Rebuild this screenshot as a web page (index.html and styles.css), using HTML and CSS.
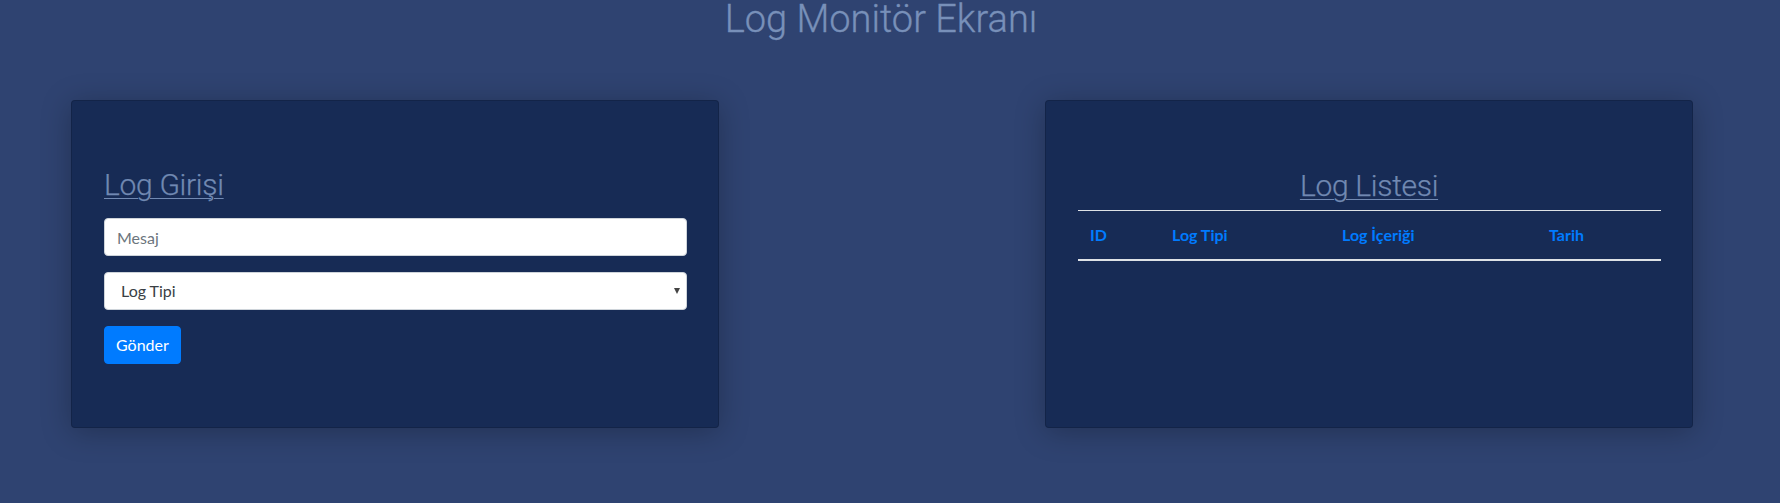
FILE: index.html
```html
<!DOCTYPE html>
<html lang="tr">
<head>
<meta charset="utf-8">
<title>Log Monitör Ekranı</title>
<link rel="stylesheet" href="styles.css">
</head>
<body>
  <h1 class="page-title">Log Monitör Ekranı</h1>
  <main class="panels">
    <section class="card card-form">
      <h2 class="card-title">Log Girişi</h2>
      <form class="log-form">
        <input class="field" type="text" placeholder="Mesaj">
        <div class="select-wrap">
          <select class="field field-select">
            <option>Log Tipi</option>
            <option>Info</option>
            <option>Warning</option>
            <option>Error</option>
          </select>
        </div>
        <button class="btn" type="button">Gönder</button>
      </form>
    </section>
    <section class="card card-list">
      <h2 class="card-title card-title-center">Log Listesi</h2>
      <table class="log-table">
        <thead>
          <tr>
            <th class="col-id">ID</th>
            <th class="col-type">Log Tipi</th>
            <th class="col-content">Log İçeriği</th>
            <th class="col-date">Tarih</th>
          </tr>
        </thead>
        <tbody></tbody>
      </table>
    </section>
  </main>
</body>
</html>
```

FILE: styles.css
```css
* { box-sizing: border-box; }

html, body {
  margin: 0;
  padding: 0;
}

body {
  background: #2f4371;
  font-family: Lato, "Noto Sans", sans-serif;
  font-size: 16px;
  color: #212529;
  height: 503px;
  overflow: hidden;
}

.page-title {
  margin: 0;
  font-family: Roboto, sans-serif;
  font-weight: 300;
  font-size: 38px;
  line-height: 1;
  height: 38px;
  text-align: center;
  color: #7890b9;
  padding-right: 18px;
  -webkit-text-stroke: 0.3px #7890b9;
}

.panels {
  display: grid;
  grid-template-columns: 648px 648px;
  column-gap: 326px;
  padding-left: 71px;
  margin-top: 62px;
}

.card {
  height: 328px;
  background: #172b55;
  border: 1px solid rgba(0, 0, 0, 0.15);
  border-radius: 4px;
  box-shadow: 0 4px 30px rgba(0, 0, 0, 0.26);
  padding: 66px 32px 0 32px;
}

.card-title {
  margin: 0 0 15px 0;
  font-family: Roboto, sans-serif;
  font-weight: 300;
  font-size: 30px;
  line-height: 36px;
  color: #7189b2;
  text-decoration: underline;
  text-decoration-thickness: 1px;
  text-underline-offset: 3px;
  letter-spacing: -0.3px;
  -webkit-text-stroke: 0.25px #7189b2;
}

.card-title-center {
  text-align: center;
  margin: 1px 0 6px 0;
}

.log-form {
  display: flex;
  flex-direction: column;
  align-items: flex-start;
  gap: 16px;
}

.field {
  display: block;
  width: 583px;
  height: 38px;
  padding: 6px 12px;
  font-family: Lato, "Noto Sans", sans-serif;
  font-size: 16px;
  line-height: 1.5;
  color: #495057;
  background: #fff;
  border: 1px solid #ced4da;
  border-radius: 4px;
  outline: none;
}

.field::placeholder {
  color: #6c757d;
}

.select-wrap {
  position: relative;
}

.field-select {
  appearance: none;
  -webkit-appearance: none;
  padding-left: 16px;
  color: #3a3f44;
}

.select-wrap::after {
  content: "";
  position: absolute;
  right: 7px;
  top: 16px;
  border-left: 3.5px solid transparent;
  border-right: 3.5px solid transparent;
  border-top: 6px solid #444;
}

.btn {
  height: 38px;
  padding: 6px 11px;
  font-family: Lato, "Noto Sans", sans-serif;
  font-size: 16px;
  line-height: 1.5;
  color: #fff;
  background: #007bff;
  border: 1px solid #007bff;
  border-radius: 4px;
  cursor: pointer;
}

.log-table {
  width: 583px;
  border-collapse: collapse;
  table-layout: fixed;
}

.log-table th {
  text-align: left;
  font-family: Lato, "Noto Sans", sans-serif;
  font-weight: 700;
  font-size: 16px;
  line-height: 24px;
  color: #007bff;
  padding: 12px;
  border-top: 1px solid #dee2e6;
  border-bottom: 2px solid #dee2e6;
}

.col-id { width: 82px; }
.col-type { width: 170px; }
.col-content { width: 207px; }
.col-date { width: 124px; }
```
